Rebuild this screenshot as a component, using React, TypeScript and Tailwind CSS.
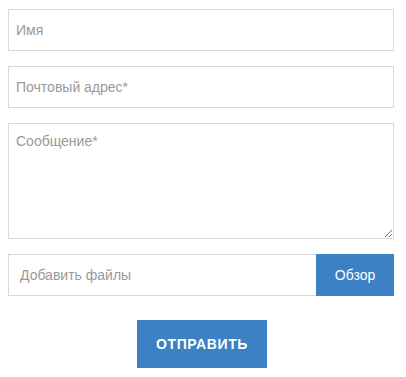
import React from 'react';

const fieldClass =
  'block w-full h-[42px] border border-[#d9d9d9] bg-white px-[7px] text-[14px] text-[#555] placeholder:text-[#999] outline-none';

export default function App() {
  return (
    <div className="min-h-[377px] w-[406px] bg-white font-['Liberation_Sans',Arial,sans-serif]">
      <form className="flex flex-col pl-2 pr-3 pt-[9px]">
        <input type="text" placeholder="Имя" className={fieldClass} />
        <input type="email" placeholder="Почтовый адрес*" className={`${fieldClass} mt-[15px]`} />
        <textarea
          placeholder="Сообщение*"
          className="mt-[15px] block h-[116px] w-full border border-[#d9d9d9] bg-white px-[7px] py-[7px] text-[14px] text-[#555] placeholder:text-[#999] outline-none"
        />
        <div className="mt-[15px] flex h-[42px] border border-[#d9d9d9] bg-white">
          <span className="flex flex-1 items-center px-[11px] text-[14px] text-[#999]">Добавить файлы</span>
          <button type="button" className="-my-px -mr-px w-[78px] bg-[#3b81c4] text-[14px] text-white">
            Обзор
          </button>
        </div>
        <div className="mt-[24px] flex justify-center">
          <button
            type="button"
            className="ml-[2px] h-[48px] w-[130px] bg-[#3b81c4] text-[14px] font-bold tracking-[0.6px] text-white"
          >
            ОТПРАВИТЬ
          </button>
        </div>
      </form>
    </div>
  );
}
